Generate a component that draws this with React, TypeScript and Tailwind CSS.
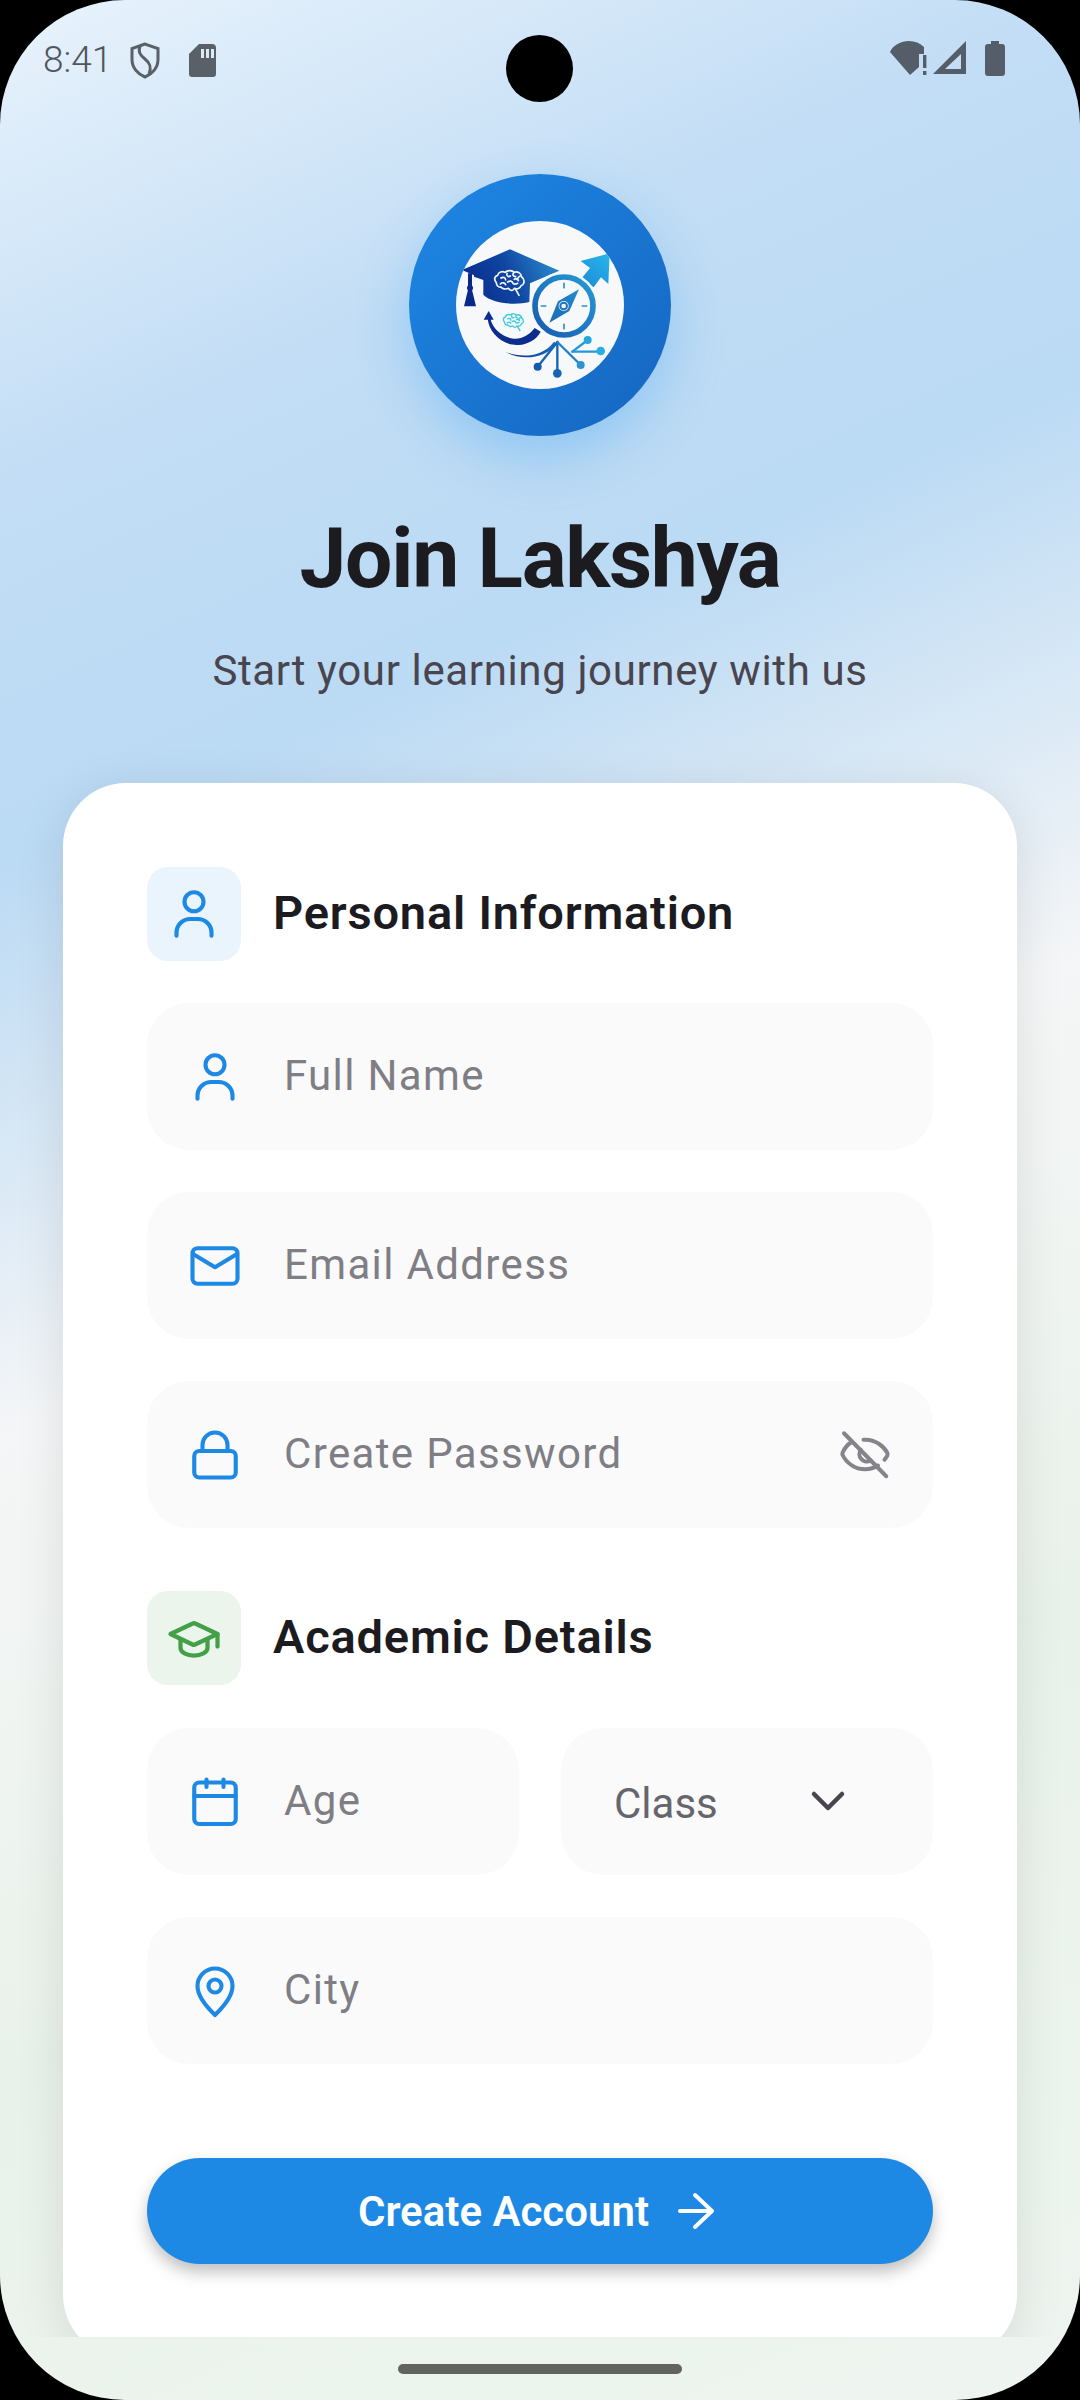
const R = "font-['Roboto',sans-serif]";

function Ic({ x, w, h, children, color = "#1e88e5", sw = 1.65, cls = "" }: any) {
  return (
    <svg viewBox={x} width={w} height={h} fill="none" stroke={color} strokeWidth={sw} strokeLinecap="round" strokeLinejoin="round" className={"shrink-0 " + cls}>
      {children}
    </svg>
  );
}

const UserIcon = () => (
  <Ic x="0 0 24 24" w={60} h={60}>
    <circle cx="12" cy="7.1" r="3.8" />
    <path d="M5 20.7v-1.2a5.5 5.5 0 0 1 5.5-5.5h3a5.5 5.5 0 0 1 5.5 5.5v1.2" />
  </Ic>
);
const MailIcon = () => (
  <Ic x="0 0 24 24" w={60} h={60}>
    <rect x="3" y="4.9" width="18" height="14.2" rx="2" />
    <path d="M3.2 7.2 12 12.5l8.8-5.3" />
  </Ic>
);
const LockIcon = () => (
  <Ic x="0 0 24 24" w={60} h={60}>
    <rect x="3.7" y="10.4" width="16.6" height="10.6" rx="2" />
    <path d="M7 10.4V8a5 5 0 0 1 10 0v2.4" />
  </Ic>
);
const CalendarIcon = () => (
  <Ic x="0 0 24 24" w={60} h={60}>
    <rect x="3.7" y="4.2" width="16.6" height="16.6" rx="2" />
    <path d="M3.7 9.6h16.6M8.6 3v3M15.4 3v3" />
  </Ic>
);
const PinIcon = () => (
  <Ic x="0 0 24 24" w={60} h={60}>
    <path d="M12 21.600c-1.500-1.500-7-6.500-7-11.600a7 7 0 0 1 14 0c0 5.100-5.500 10.100-7 11.600z" />
    <circle cx="12" cy="10" r="2.600" />
  </Ic>
);
const CapIcon = () => (
  <Ic x="0 0 24 24" w={60} h={60} color="#43a047" sw={1.7}>
    <path d="M2.600 10.400 11.500 6.200c.3-.150.7-.150 1 0l8.900 4.200-9 4.200c-.3.150-.7.150-1 0z" />
    <path d="M6.600 12.400v3.600c0 1.700 2.500 3 5.400 3s5.400-1.300 5.400-3v-3.600" />
    <path d="M21.400 10.400v5" />
  </Ic>
);
const EyeOff = () => (
  <Ic x="0 0 24 24" w={60} h={60} color="#85848b" sw={1.6}>
    <path d="M3.600 3.300 20.500 20.500" />
    <path d="M11.400 5.900c.3 0 .5 0 .8 0 4 0 7.300 2.500 8.700 5.200.2.400.2.800 0 1.200-.3.500-.7 1.100-1.100 1.600" />
    <path d="M6.600 6.800C5 7.900 3.800 9.300 3.100 10.900c-.2.400-.2.800 0 1.200 1.400 3 4.900 5.600 8.900 5.600 2 0 3.700-.5 5.200-1.500" />
    <path d="M10.300 9.900a3 3 0 0 0 4 4.300" />
  </Ic>
);

function Brain({ x, y, s, color, sw }: any) {
  return (
    <g transform={`translate(${x} ${y}) scale(${s})`} fill="none" stroke={color} strokeWidth={sw} strokeLinecap="round" strokeLinejoin="round">
      <path d="M-42 6c-8-8-6-20 4-22 2-10 14-14 22-9 8-8 22-6 28 0 10-4 22 4 22 14 10 6 10 22-2 26-2 8-12 12-20 8-2 6-8 8-14 4l-4-4c-8 4-18 2-22-4-8 2-14-6-14-13z" />
      <path d="M-28-8c6-4 14-2 14 6M-10-22c-2 8 4 12 10 8M10-24c-4 6-2 12 6 12M30-14c-6 2-10 8-6 14M-30 10c6-6 14-4 16 2M-8 4c6-4 14-4 16 4 4 4 10 2 14 0M12-4c2-2 6-2 8 0M16 26l10 18" />
    </g>
  );
}

function Logo() {
  return (
    <svg viewBox="48 33 504 504" width={168} height={168} className="rounded-full bg-[#f6f8fa]">
      <defs>
        <linearGradient id="capG" x1="70" y1="260" x2="350" y2="140" gradientUnits="userSpaceOnUse">
          <stop offset="0" stopColor="#0b2788" />
          <stop offset="0.5" stopColor="#0f46a2" />
          <stop offset="1" stopColor="#2b8ccf" />
        </linearGradient>
        <linearGradient id="ringG" x1="280" y1="380" x2="460" y2="200" gradientUnits="userSpaceOnUse">
          <stop offset="0" stopColor="#1659ad" />
          <stop offset="1" stopColor="#279ad8" />
        </linearGradient>
        <linearGradient id="swG" x1="190" y1="430" x2="350" y2="380" gradientUnits="userSpaceOnUse">
          <stop offset="0" stopColor="#0b2788" />
          <stop offset="1" stopColor="#1c74c0" />
        </linearGradient>
        <linearGradient id="arG" x1="430" y1="230" x2="510" y2="130" gradientUnits="userSpaceOnUse">
          <stop offset="0" stopColor="#1a8ed6" />
          <stop offset="1" stopColor="#29b6ec" />
        </linearGradient>
      </defs>
      <path d="M66 180 210 118l148 64-88 38 -2 56c-40 10-110 6-138-22v-44l-28-10v-4z" fill="url(#capG)" />
      <path d="M84 190h12v38h-12z" fill="#0b2788" />
      <circle cx="90" cy="234" r="9" fill="#0b2788" />
      <path d="M72 289 84 240h12l12 49z" fill="#0b2788" />
      <Brain x={211} y={212} s={1} color="#f6f8fa" sw={5} />
      <path d="M422 153 509 130l-4 92-22-20-22 30-37-26 26-32z" fill="url(#arG)" />
      <circle cx="372" cy="288" r="103" fill="#f6f8fa" />
      <circle cx="372" cy="288" r="87" fill="none" stroke="url(#ringG)" strokeWidth="17" />
      <path d="M372 220v13M372 343v13M304 288h13M427 288h13" stroke="#2a8fd0" strokeWidth="5" strokeLinecap="round" />
      <path d="M417 238 388 303 328 338 354 274z" fill="url(#ringG)" />
      <circle cx="371" cy="288" r="15" fill="#f6f8fa" />
      <circle cx="371" cy="288" r="10" fill="none" stroke="#1c74c0" strokeWidth="6" />
      <Brain x={222} y={332} s={0.68} color="#3ccbe3" sw={6} />
      <path d="M143 325C146 370 190 408 235 405 265 403 290 388 302 365L284 354C268 375 245 388 222 386 190 383 158 360 151 325z" fill="#0d2c90" />
      <path d="M146 303 131 329h30z" fill="#0d2c90" />
      <path d="M196 425c40 18 110 20 146-30l8 6c-32 46-110 52-154 24z" fill="url(#swG)" />
      <g fill="none" strokeWidth="7" strokeLinecap="round">
        <path d="M352 396 293 470" stroke="#1664b3" />
        <path d="M352 396V490" stroke="#1664b3" />
        <path d="M352 396 422 465" stroke="#1e80c8" />
        <path d="M397 425 443 390" stroke="#2399d8" />
        <path d="M397 425H482" stroke="#2399d8" />
      </g>
      <circle cx="293" cy="470" r="12" fill="#1659ad" />
      <circle cx="352" cy="490" r="13" fill="#1664b3" />
      <circle cx="422" cy="465" r="12" fill="#2a93d0" />
      <circle cx="443" cy="390" r="12" fill="#27a5dd" />
      <circle cx="482" cy="423" r="13" fill="#27aee5" />
    </svg>
  );
}

function StatusBar() {
  return (
    <div className="h-[174px] shrink-0 flex items-start justify-between pl-[43px] pr-[75px] pt-[41px] relative">
      <div className="flex items-center h-[38px]">
        <span className={`${R} text-[37px] font-light leading-[38px] text-[#50565e] w-[86px]`}>8:41</span>
        <svg width="32" height="37" viewBox="0 0 32 37" fill="none" stroke="#5a6068" strokeWidth="3" className="shrink-0">
          <path d="M16 2 3 6.500v11c0 8 5.500 14.500 13 17.500 7.500-3 13-9.500 13-17.500v-11z" />
          <path d="M11 4c-2 6 0 9 5 13s7 8 4 15" />
        </svg>
        <svg width="27" height="33" viewBox="0 0 27 33" className="shrink-0 ml-[28px]">
          <path d="M10 0h13a4 4 0 0 1 4 4v26a3 3 0 0 1-3 3H3a3 3 0 0 1-3-3V10z" fill="#5a6068" />
          <path d="M12 5h3v9h-3zM17 5h3v9h-3zM22 5h3v9h-3z" fill="#dce9f6" />
        </svg>
      </div>
      <div className="flex items-start gap-[3px]">
        <svg width="40" height="34" viewBox="0 0 40 34" className="shrink-0">
          <path d="M0 11C3 4 11 0 19 0c6 0 11 2 15 6v7h-5v13l-9 8z" fill="#555e68" />
          <path d="M33 14h3.400v13H33zM33 30h3.400v4H33z" fill="#555e68" />
        </svg>
        <svg width="33" height="33" viewBox="0 0 33 33" className="shrink-0">
          <path fillRule="evenodd" d="M33 0v33H0zM28 13 12 28h16z" fill="#555e68" />
        </svg>
        <svg width="20" height="35" viewBox="0 0 20 35" className="shrink-0 ml-[16px]">
          <path d="M6 0h8v3h3a3 3 0 0 1 3 3v26a3 3 0 0 1-3 3H3a3 3 0 0 1-3-3V6a3 3 0 0 1 3-3h3z" fill="#555e68" />
        </svg>
      </div>
      <div className="absolute left-[506px] top-[35px] w-[67px] h-[67px] rounded-full bg-black" />
    </div>
  );
}

function Section({ bg, icon, title }: any) {
  return (
    <div className="flex items-center gap-[32px] h-[94px]">
      <div className={`w-[94px] h-[94px] rounded-[21px] flex items-center justify-center ${bg}`}>{icon}</div>
      <div className={`${R} text-[47px] font-semibold text-[#1c1b1f] tracking-[0.8px] -translate-y-[1px]`}>{title}</div>
    </div>
  );
}

function Field({ icon, label, trailing }: any) {
  return (
    <div className="h-[147px] rounded-[42px] bg-[#fafafa] flex items-center pl-[38px] pr-[38px]">
      {icon}
      <span className={`${R} ml-[39px] flex-1 text-[42px] text-[#7f7e85] tracking-[1.35px] -translate-y-[1px]`}>{label}</span>
      {trailing}
    </div>
  );
}

export default function App() {
  return (
    <div className="w-[1080px] h-[2400px] bg-black">
      <div className="w-full h-full rounded-[125px] overflow-hidden flex flex-col bg-[linear-gradient(155.8deg,#e9f3fc_0%,#c2ddf5_17%,#bbdaf4_30%,#f5f6f7_50%,#e9f2ea_72%,#eef5f0_100%)]">
        <div className="flex-1 min-h-0 overflow-hidden flex flex-col">
          <StatusBar />
          <div className="flex flex-col items-center shrink-0">
            <div className="w-[262px] h-[262px] rounded-full bg-[linear-gradient(135deg,#1e88e5,#1565c0)] flex items-center justify-center shadow-[0_21px_53px_rgba(33,150,243,0.3)]">
              <Logo />
            </div>
            <h1 className={`${R} mt-[73px] text-[84px] leading-[100px] font-bold text-[#1c1b1f] tracking-[-1.3px]`}>Join Lakshya</h1>
            <p className={`${R} mt-[34px] text-[42px] leading-[56px] text-[#49454f] tracking-[0.63px]`}>Start your learning journey with us</p>
          </div>
          <div className="mx-[63px] mt-[84px] h-[1575px] shrink-0 bg-white rounded-[63px] px-[84px] pt-[84px] shadow-[0_10px_50px_rgba(0,0,0,0.1)]">
            <Section bg="bg-[#e9f4fd]" icon={<UserIcon />} title="Personal Information" />
            <div className="flex flex-col gap-[42px] mt-[42px]">
              <Field icon={<UserIcon />} label="Full Name" />
              <Field icon={<MailIcon />} label="Email Address" />
              <Field icon={<LockIcon />} label="Create Password" trailing={<EyeOff />} />
            </div>
            <div className="mt-[63px]">
              <Section bg="bg-[#ebf5ec]" icon={<CapIcon />} title="Academic Details" />
            </div>
            <div className="flex flex-col gap-[42px] mt-[43px]">
              <div className="grid grid-cols-2 gap-[42px]">
                <Field icon={<CalendarIcon />} label="Age" />
                <div className="h-[147px] rounded-[42px] bg-[#fafafa] flex items-center pl-[53px] pr-[75px]">
                  <span className={`${R} flex-1 text-[42px] text-[#66656c] translate-y-[2px]`}>Class</span>
                  <svg width="60" height="60" viewBox="0 0 60 60" fill="none" stroke="#49454f" strokeWidth="4.500" strokeLinecap="round" strokeLinejoin="round" className="-translate-y-[1px]">
                    <path d="M16 23l14 14 14-14" />
                  </svg>
                </div>
              </div>
              <Field icon={<PinIcon />} label="City" />
            </div>
            <button className="mt-[94px] w-full h-[106px] rounded-[53px] bg-[#1e88e5] flex items-center justify-center shadow-[0_8px_16px_rgba(0,0,0,0.25)]">
              <span className={`${R} text-[42px] font-semibold text-white tracking-[0px]`}>Create Account</span>
              <svg width="52" height="52" viewBox="0 0 52 52" fill="none" stroke="white" strokeWidth="4" strokeLinecap="round" strokeLinejoin="round" className="ml-[21px]">
                <path d="M10 26h32M25 10l17 16-17 16" />
              </svg>
            </button>
          </div>
        </div>
        <div className="h-[63px] shrink-0 flex justify-center pt-[27px]">
          <div className="w-[284px] h-[10px] rounded-full bg-[#616461]" />
        </div>
      </div>
    </div>
  );
}
